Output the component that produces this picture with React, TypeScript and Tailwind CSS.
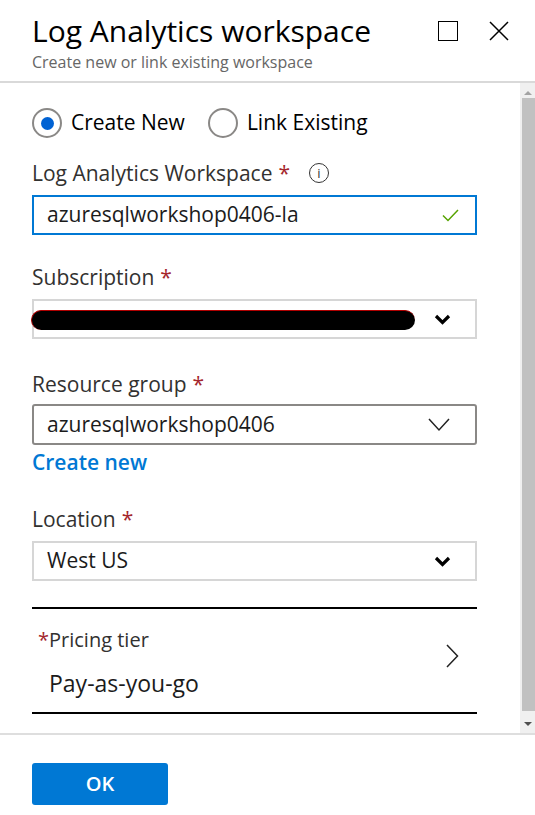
const font = { fontFamily: '"Open Sans", "Noto Sans", sans-serif' };

function Req() {
  return <span className="text-[#a4262c] ml-[6px]">*</span>;
}

function BoldChevron() {
  return (
    <svg width="17" height="11" viewBox="0 0 17 11" fill="none">
      <path d="M2 2 L8.5 8.5 L15 2" stroke="#000" strokeWidth="3.2" />
    </svg>
  );
}

export default function App() {
  return (
    <div className="w-[535px] h-[815px] bg-white flex flex-col overflow-hidden text-[#323130]" style={font}>
      {/* header */}
      <header className="h-[81px] pl-[32px] pr-[26px] pt-[14px] flex justify-between shrink-0">
        <div>
          <h1 className="text-[30px] leading-[34px] text-black">Log Analytics workspace</h1>
          <p className="mt-[4px] text-[16px] leading-[20px] text-[#666]">Create new or link existing workspace</p>
        </div>
        <div className="flex items-start gap-[31px] pt-[7px]">
          <div className="w-[20px] h-[20px] border-[1.5px] border-black" />
          <svg width="20" height="20" viewBox="0 0 20 20">
            <path d="M1 1 L19 19 M19 1 L1 19" stroke="#000" strokeWidth="1.5" />
          </svg>
        </div>
      </header>
      <div className="h-[2px] bg-[#d9d9d9] shrink-0" />

      {/* body */}
      <div className="flex h-[650px] shrink-0">
        <main className="flex-1 pl-[32px] pr-[43px]">
          {/* radios */}
          <div className="mt-[25px] flex items-center h-[30px] text-[21px] text-black">
            <div className="w-[30px] h-[30px] rounded-full border-2 border-[#8a8886] flex items-center justify-center">
              <div className="w-[13px] h-[13px] rounded-full bg-[#0062d3]" />
            </div>
            <span className="ml-[9px]">Create New</span>
            <div className="ml-[23px] w-[30px] h-[30px] rounded-full border-2 border-[#8a8886]" />
            <span className="ml-[9px]">Link Existing</span>
          </div>

          {/* workspace name */}
          <div className="mt-[22px] flex items-center text-[21px] leading-[26px]">
            <span>Log Analytics Workspace</span>
            <Req />
            <span className="ml-[19px] w-[20px] h-[20px] rounded-full border-[1.5px] border-[#333] flex items-center justify-center text-[13px] leading-none text-[#333]">
              i
            </span>
          </div>
          <div className="mt-[9px] h-[40px] border-2 border-[#0078d4] flex items-center pl-[13px] pr-[16px] text-[21px] text-[#1b1b1b]">
            <span className="flex-1">azuresqlworkshop0406-la</span>
            <svg width="17" height="13" viewBox="0 0 17 13" fill="none">
              <path d="M1 6.5 L6 11.5 L16 1" stroke="#57a300" strokeWidth="1.5" />
            </svg>
          </div>

          {/* subscription */}
          <div className="mt-[29px] text-[21px] leading-[26px]">
            Subscription
            <Req />
          </div>
          <div className="relative mt-[9px] h-[40px] border-2 border-[#d6d6d6] flex items-center justify-end pr-[24px]">
            <div className="absolute left-[-3px] top-[9px] w-[384px] h-[20px] rounded-full bg-black border-t-[1.5px] border-l-[1.5px] border-[#b00000]" />
            <BoldChevron />
          </div>

          {/* resource group */}
          <div className="mt-[32px] text-[21px] leading-[26px]">
            Resource group
            <Req />
          </div>
          <div className="mt-[7px] h-[41px] border-2 border-[#8a8886] rounded-[3px] flex items-center pl-[13px] pr-[25px] text-[21px] text-[#1b1b1b]">
            <span className="flex-1">azuresqlworkshop0406</span>
            <svg width="22" height="14" viewBox="0 0 22 14" fill="none">
              <path d="M1 1 L11 12 L21 1" stroke="#222" strokeWidth="1.5" />
            </svg>
          </div>
          <div className="mt-[4px] text-[21px] leading-[26px] font-semibold text-[#0078d4]">Create new</div>

          {/* location */}
          <div className="mt-[31px] text-[21px] leading-[26px]">
            Location
            <Req />
          </div>
          <div className="mt-[9px] h-[40px] border-2 border-[#d6d6d6] flex items-center pl-[13px] pr-[24px] text-[21px] text-[#1b1b1b]">
            <span className="flex-1">West US</span>
            <BoldChevron />
          </div>

          {/* pricing tier */}
          <div className="mt-[26px] h-[2px] bg-black" />
          <div className="flex items-center pr-[18px]">
            <div className="flex-1 pl-[6px]">
              <div className="mt-[18px] text-[20px] leading-[26px]">
                <span className="text-[#a4262c]">*</span>Pricing tier
              </div>
              <div className="mt-[16px] pl-[11px] text-[23px] leading-[28px] text-[#1b1b1b]">Pay-as-you-go</div>
              <div className="h-[15px]" />
            </div>
            <svg width="13" height="24" viewBox="0 0 13 24" fill="none" className="mb-[10px]">
              <path d="M1 1 L11.5 12 L1 23" stroke="#222" strokeWidth="1.5" />
            </svg>
          </div>
          <div className="h-[2px] bg-black" />
        </main>

        {/* scrollbar */}
        <div className="w-[15px] bg-[#f0f0f0] flex flex-col">
          <div className="h-[15px] flex items-end justify-center pb-[3px]">
            <div className="w-0 h-0 border-l-[4px] border-r-[4px] border-b-[4px] border-l-transparent border-r-transparent border-b-[#a3a3a3]" />
          </div>
          <div className="flex-1 ml-[2px] bg-[#c1c1c1]" />
          <div className="h-[22px] flex items-start justify-center pt-[11px]">
            <div className="w-0 h-0 border-l-[4px] border-r-[4px] border-t-[4px] border-l-transparent border-r-transparent border-t-[#505050]" />
          </div>
        </div>
      </div>

      <div className="h-[2px] bg-[#dedede] shrink-0" />
      <footer className="pl-[32px] pt-[28px]">
        <button className="w-[136px] h-[42px] rounded-[3px] bg-[#0078d4] text-white text-[20px] font-semibold">OK</button>
      </footer>
    </div>
  );
}
